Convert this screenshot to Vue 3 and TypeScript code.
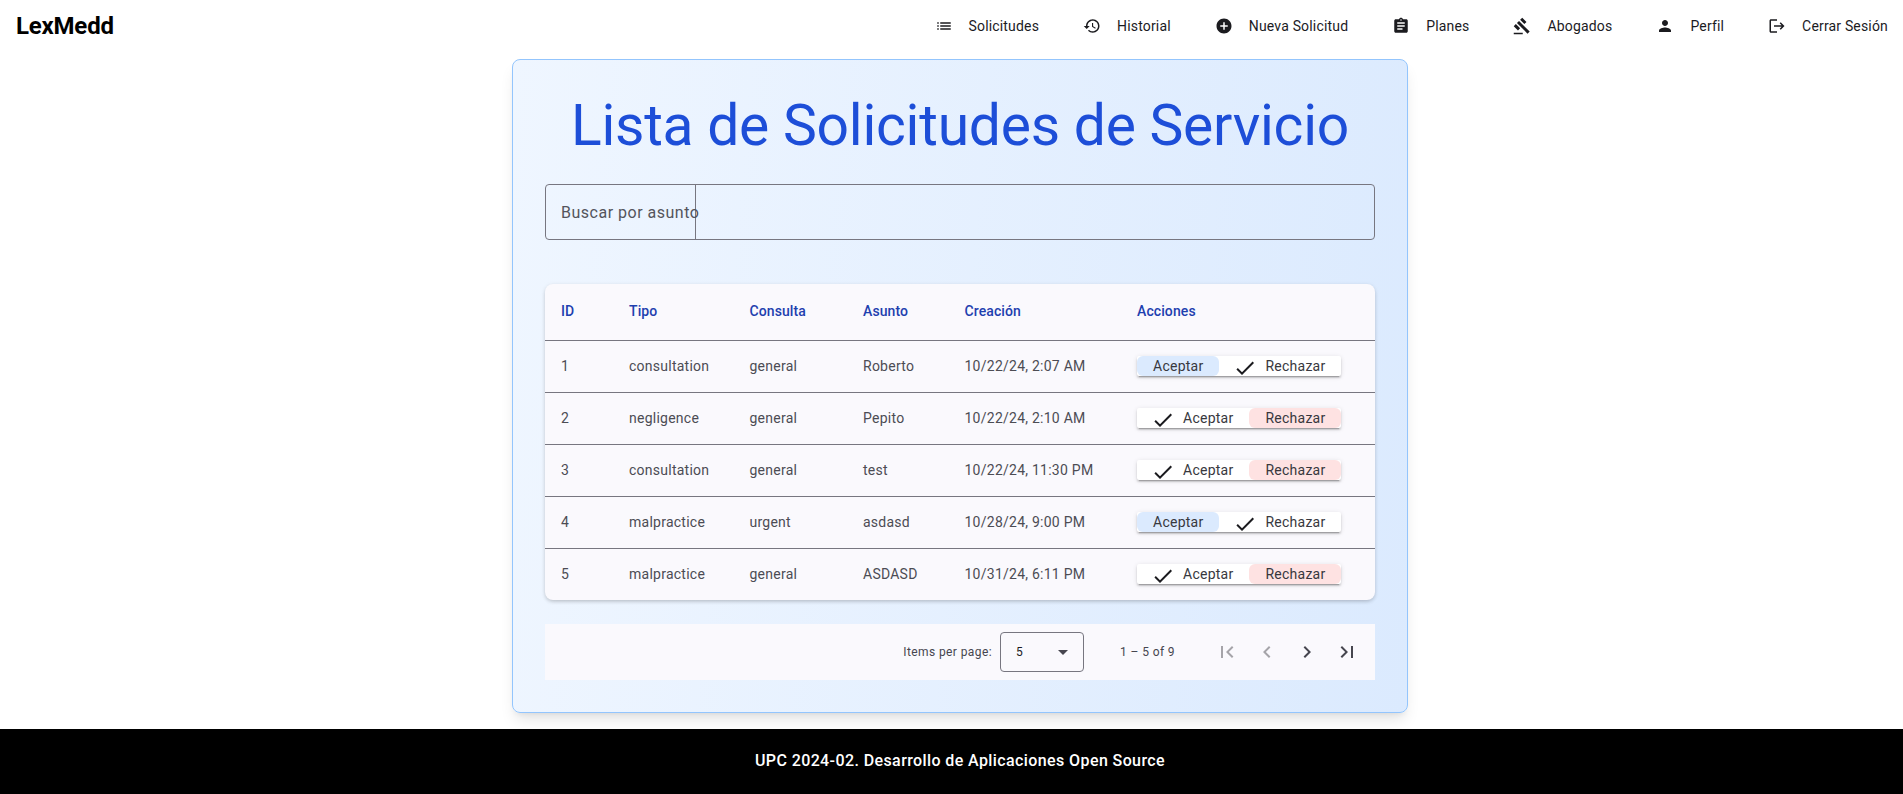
<script setup lang="ts">
interface NavItem {
  label: string
  icon: string
}

interface RequestRow {
  id: number
  type: string
  consult: string
  subject: string
  created: string
  accepted: boolean
}

const navItems: NavItem[] = [
  { label: 'Solicitudes', icon: 'M3 13h2v-2H3v2zm0 4h2v-2H3v2zm0-8h2V7H3v2zm4 4h14v-2H7v2zm0 4h14v-2H7v2zM7 7v2h14V7H7z' },
  { label: 'Historial', icon: 'M13 3c-4.97 0-9 4.03-9 9H1l3.89 3.89.07.14L9 12H6c0-3.87 3.13-7 7-7s7 3.13 7 7-3.13 7-7 7c-1.93 0-3.68-.79-4.94-2.06l-1.42 1.42C8.27 19.99 10.51 21 13 21c4.97 0 9-4.03 9-9s-4.03-9-9-9zm-1 5v5l4.28 2.54.72-1.21-3.5-2.08V8H12z' },
  { label: 'Nueva Solicitud', icon: 'M12 2C6.48 2 2 6.48 2 12s4.48 10 10 10 10-4.48 10-10S17.52 2 12 2zm5 11h-4v4h-2v-4H7v-2h4V7h2v4h4v2z' },
  { label: 'Planes', icon: 'M19 3h-4.18C14.4 1.84 13.3 1 12 1c-1.3 0-2.4.84-2.82 2H5c-1.1 0-2 .9-2 2v14c0 1.1.9 2 2 2h14c1.1 0 2-.9 2-2V5c0-1.1-.9-2-2-2zm-7 0c.55 0 1 .45 1 1s-.45 1-1 1-1-.45-1-1 .45-1 1-1zm2 14H7v-2h7v2zm3-4H7v-2h10v2zm0-4H7V7h10v2z' },
  { label: 'Abogados', icon: 'M1 21h12v2H1v-2zM5.245 8.07l2.83-2.827 14.14 14.142-2.828 2.828L5.245 8.07zM12.317 1l5.657 5.656-2.83 2.83-5.654-5.66L12.317 1zM3.825 9.485l5.657 5.657-2.828 2.828-5.657-5.657 2.828-2.828z' },
  { label: 'Perfil', icon: 'M12 12c2.21 0 4-1.79 4-4s-1.79-4-4-4-4 1.79-4 4 1.79 4 4 4zm0 2c-2.67 0-8 1.34-8 4v2h16v-2c0-2.66-5.33-4-8-4z' },
  { label: 'Cerrar Sesión', icon: 'M17 7l-1.41 1.41L18.17 11H8v2h10.17l-2.58 2.58L17 17l5-5zM4 5h8V3H4c-1.1 0-2 .9-2 2v14c0 1.1.9 2 2 2h8v-2H4V5z' },
]

const rows: RequestRow[] = [
  { id: 1, type: 'consultation', consult: 'general', subject: 'Roberto', created: '10/22/24, 2:07 AM', accepted: true },
  { id: 2, type: 'negligence', consult: 'general', subject: 'Pepito', created: '10/22/24, 2:10 AM', accepted: false },
  { id: 3, type: 'consultation', consult: 'general', subject: 'test', created: '10/22/24, 11:30 PM', accepted: false },
  { id: 4, type: 'malpractice', consult: 'urgent', subject: 'asdasd', created: '10/28/24, 9:00 PM', accepted: true },
  { id: 5, type: 'malpractice', consult: 'general', subject: 'ASDASD', created: '10/31/24, 6:11 PM', accepted: false },
]

const checkPath = 'M9 16.17L4.83 12l-1.41 1.41L9 19 21 7l-1.41-1.41z'

const pageButtons = [
  { path: 'M18.41 16.59L13.82 12l4.59-4.59L17 6l-6 6 6 6zM6 6h2v12H6z', disabled: true },
  { path: 'M15.41 7.41L14 6l-6 6 6 6 1.41-1.41L10.83 12z', disabled: true },
  { path: 'M10 6L8.59 7.41 13.17 12l-4.58 4.58L10 18l6-6z', disabled: false },
  { path: 'M5.59 7.41L10.18 12l-4.59 4.59L7 18l6-6-6-6zM16 6h2v12h-2z', disabled: false },
]
</script>

<template>
  <div class="page">
    <header class="toolbar">
      <span class="logo">LexMedd</span>
      <nav class="nav">
        <a v-for="item in navItems" :key="item.label" class="nav-link">
          <svg class="nav-icon" viewBox="0 0 24 24"><path :d="item.icon" /></svg>
          <span>{{ item.label }}</span>
        </a>
      </nav>
    </header>

    <main class="main">
      <section class="card">
        <h1 class="title">Lista de Solicitudes de Servicio</h1>

        <div class="search">
          <div class="search-start">
            <span class="search-label">Buscar por asunto</span>
          </div>
        </div>

        <div class="table-wrap">
          <table class="table">
            <thead>
              <tr>
                <th class="col-id">ID</th>
                <th class="col-type">Tipo</th>
                <th class="col-consult">Consulta</th>
                <th class="col-subject">Asunto</th>
                <th class="col-created">Creación</th>
                <th>Acciones</th>
              </tr>
            </thead>
            <tbody>
              <tr v-for="row in rows" :key="row.id">
                <td>{{ row.id }}</td>
                <td>{{ row.type }}</td>
                <td>{{ row.consult }}</td>
                <td>{{ row.subject }}</td>
                <td>{{ row.created }}</td>
                <td>
                  <div class="toggle">
                    <button class="toggle-btn" :class="{ accept: row.accepted }">
                      <svg v-if="!row.accepted" class="check" viewBox="0 0 24 24"><path :d="checkPath" /></svg>
                      Aceptar
                    </button>
                    <button class="toggle-btn" :class="{ reject: !row.accepted }">
                      <svg v-if="row.accepted" class="check" viewBox="0 0 24 24"><path :d="checkPath" /></svg>
                      Rechazar
                    </button>
                  </div>
                </td>
              </tr>
            </tbody>
          </table>
        </div>

        <div class="paginator">
          <span class="per-page">Items per page:</span>
          <div class="select">
            <span>5</span>
            <span class="caret"></span>
          </div>
          <span class="range">1 – 5 of 9</span>
          <div class="page-buttons">
            <button v-for="(btn, i) in pageButtons" :key="i" class="page-btn" :class="{ disabled: btn.disabled }">
              <svg viewBox="0 0 24 24"><path :d="btn.path" /></svg>
            </button>
          </div>
        </div>
      </section>
    </main>

    <footer class="footer">UPC 2024-02. Desarrollo de Aplicaciones Open Source</footer>
  </div>
</template>

<style>
html, body {
  margin: 0;
  background: #fff;
}
</style>

<style scoped>
.page {
  display: flex;
  flex-direction: column;
  min-height: 794px;
  font-family: Roboto, "Liberation Sans", sans-serif;
}

.toolbar {
  display: flex;
  align-items: center;
  justify-content: space-between;
  height: 52px;
  padding: 0 15px 0 16px;
  color: #000;
}

.logo {
  font-size: 24px;
  font-weight: 700;
  line-height: 56px;
  letter-spacing: -0.2px;
  color: #000;
}

.nav {
  display: flex;
  gap: 44px;
}

.nav-link {
  display: flex;
  align-items: center;
  gap: 16px;
  font-size: 14px;
  font-weight: 400;
  letter-spacing: 0.17px;
  color: #1b1b1f;
}

.nav-icon {
  width: 18px;
  height: 18px;
  fill: #1b1b1f;
}

.main {
  flex: 1;
  display: flex;
  justify-content: center;
  padding: 7px 0 16px;
}

.card {
  box-sizing: border-box;
  width: 896px;
  margin-left: 17px;
  padding: 34px 32px 32px;
  border: 1px solid #93c5fd;
  border-radius: 8px;
  background: linear-gradient(95deg, #eff6ff, #dbeafe);
  box-shadow: 0 10px 15px -3px rgba(0, 0, 0, 0.1), 0 4px 6px -4px rgba(0, 0, 0, 0.1);
}

.title {
  margin: 0 0 26px;
  font-size: 57px;
  font-weight: 400;
  line-height: 64px;
  letter-spacing: -0.25px;
  text-align: center;
  color: #1d4ed8;
}

.search {
  box-sizing: border-box;
  height: 56px;
  border: 1px solid #777680;
  border-radius: 4px;
}

.search-start {
  box-sizing: border-box;
  display: flex;
  align-items: center;
  width: 150px;
  height: 100%;
  padding-left: 15px;
  border-right: 1px solid #777680;
  white-space: nowrap;
}

.search-label {
  font-size: 16px;
  letter-spacing: 0.5px;
  color: #54545c;
}

.table-wrap {
  margin-top: 44px;
  border-radius: 8px;
  overflow: hidden;
  background: #faf9fd;
  box-shadow: 0 2px 4px -1px rgba(0, 0, 0, 0.2), 0 1px 5px rgba(0, 0, 0, 0.08);
}

.table {
  width: 100%;
  border-collapse: separate;
  border-spacing: 0;
  table-layout: fixed;
  font-size: 14px;
  letter-spacing: 0.25px;
}

.table th {
  box-sizing: border-box;
  height: 57px;
  padding: 0 16px 2px;
  border-bottom: 1px solid #777680;
  text-align: left;
  font-weight: 500;
  font-size: 14px;
  letter-spacing: 0.1px;
  color: #1e40af;
}

.table td {
  box-sizing: border-box;
  height: 52px;
  padding: 0 16px 2px;
  border-bottom: 1px solid #777680;
  color: #4c4c54;
  white-space: nowrap;
  line-height: 20px;
}

.table tbody tr:last-child td {
  height: 51px;
  border-bottom: 0;
}

.col-id { width: 68px; }
.col-type { width: 120.5px; }
.col-consult { width: 113.5px; }
.col-subject { width: 101.5px; }
.col-created { width: 172.5px; }

.toggle {
  display: flex;
  width: max-content;
  height: 20px;
  border-radius: 2px;
  background: #fff;
  box-shadow: 0 3px 1px -2px rgba(0, 0, 0, 0.2), 0 2px 2px rgba(0, 0, 0, 0.14), 0 1px 5px rgba(0, 0, 0, 0.12);
}

.toggle-btn {
  display: flex;
  align-items: center;
  height: 20px;
  padding: 0 16px;
  border: 0;
  border-radius: 6px;
  background: transparent;
  font-family: inherit;
  font-size: 14px;
  letter-spacing: 0.25px;
  color: #38383e;
}

.toggle-btn.accept {
  background: #dbeafe;
}

.toggle-btn.reject {
  background: #fee2e2;
}

.check {
  width: 24px;
  height: 24px;
  margin: 4px 8px 0 -2px;
  fill: #1b1b1f;
}

.paginator {
  display: flex;
  align-items: center;
  justify-content: flex-end;
  height: 56px;
  margin-top: 24px;
  padding-right: 8px;
  background: #faf9fd;
  font-size: 12px;
  letter-spacing: 0.4px;
  color: #46464f;
}

.per-page {
  margin-right: 8px;
}

.select {
  box-sizing: border-box;
  display: flex;
  align-items: center;
  justify-content: space-between;
  width: 84px;
  height: 40px;
  padding: 0 15px;
  border: 1px solid #777680;
  border-radius: 4px;
  color: #1b1b1f;
}

.caret {
  width: 0;
  height: 0;
  border-left: 5px solid transparent;
  border-right: 5px solid transparent;
  border-top: 5px solid #46464f;
}

.range {
  margin: 0 32px 0 36px;
}

.page-buttons {
  display: flex;
}

.page-btn {
  display: flex;
  align-items: center;
  justify-content: center;
  width: 40px;
  height: 40px;
  padding: 0;
  border: 0;
  background: transparent;
}

.page-btn svg {
  width: 24px;
  height: 24px;
  fill: #46464f;
}

.page-btn.disabled svg {
  fill: rgba(27, 27, 31, 0.38);
}

.footer {
  display: flex;
  align-items: center;
  justify-content: center;
  box-sizing: border-box;
  height: 65px;
  padding: 0 0 2px 17px;
  background: #000;
  color: #fff;
  font-size: 16px;
  font-weight: 500;
  letter-spacing: 0.4px;
}
</style>
